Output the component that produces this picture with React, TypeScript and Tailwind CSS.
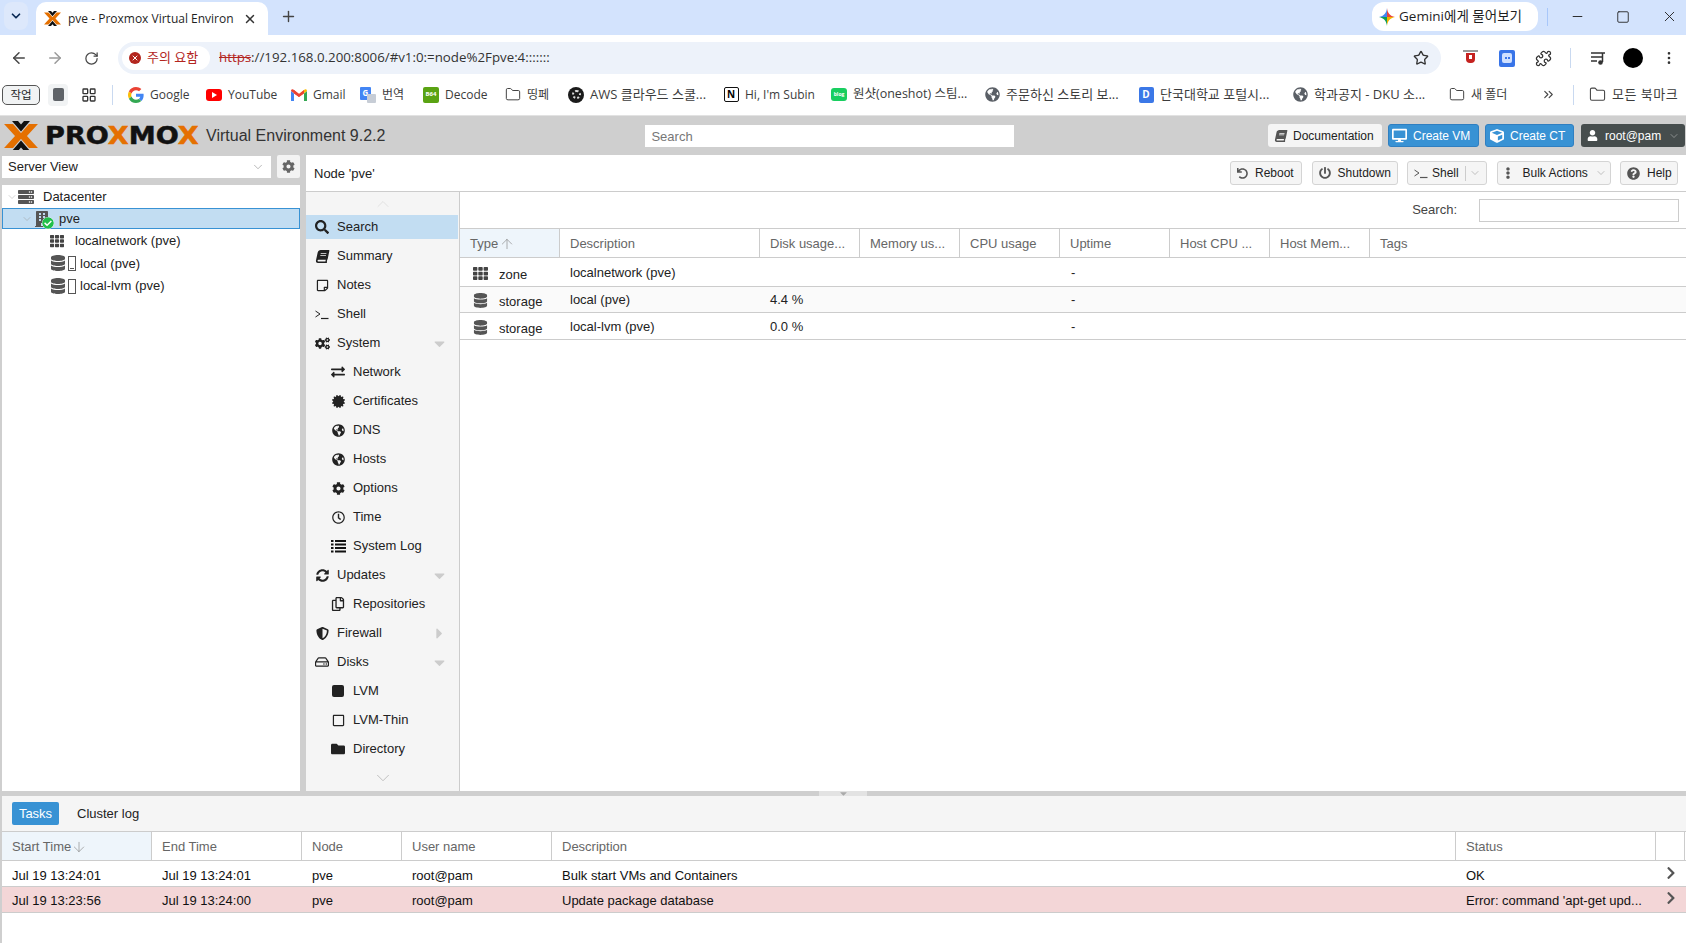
import React from "react";
import {
  ArrowLeft, ArrowRight, ArrowDown, ArrowUp, ChevronDown, ChevronUp, ChevronsRight, Folder, LayoutGrid,
  Minus, MoreVertical, Plus, Puzzle, RotateCw, Square, Star, X,
} from "lucide-react";
import {
  FaBook, FaBuilding, FaCaretDown, FaCaretRight, FaCertificate, FaCheckCircle, FaChevronRight, FaCog, FaCogs, FaCube, FaDatabase,
  FaDesktop, FaEllipsisV, FaExchangeAlt, FaFolder, FaGlobeAmericas, FaPowerOff, FaQuestionCircle, FaRegClock, FaRegCopy, FaRegHdd,
  FaRegSquare, FaRegStickyNote, FaSearch, FaServer, FaShieldAlt, FaSquareFull, FaSyncAlt, FaTh, FaUndo, FaUser,
} from "react-icons/fa";

const ProxLogoMark = ({ size = 34 }: { size?: number }) => (
  <svg width={size} height={size * 0.88} viewBox="0 0 34 30">
    <path d="M0 3 L9 3 L19.5 15 L9 27 L0 27 L11 15 Z" fill="#e57000" />
    <path d="M34 3 L25 3 L14.5 15 L25 27 L34 27 L23 15 Z" fill="#e57000" />
    <path d="M8 0 L14 0 L17 3.5 L20 0 L26 0 L17 10.5 Z" fill="#111" />
    <path d="M8 30 L14 30 L17 26.5 L20 30 L26 30 L17 19.5 Z" fill="#111" />
  </svg>
);

const GoogleG = () => (
  <svg width="16" height="16" viewBox="0 0 48 48">
    <path fill="#EA4335" d="M24 9.5c3.5 0 6.7 1.2 9.2 3.6l6.9-6.9C35.9 2.4 30.5 0 24 0 14.6 0 6.5 5.4 2.6 13.2l8 6.2C12.5 13.6 17.8 9.5 24 9.5z" />
    <path fill="#4285F4" d="M46.9 24.5c0-1.6-.1-3.1-.4-4.5H24v9h12.9c-.6 3-2.2 5.5-4.7 7.2l7.7 6c4.5-4.2 7-10.3 7-17.7z" />
    <path fill="#FBBC05" d="M10.5 28.6c-.5-1.4-.8-3-.8-4.6s.3-3.2.8-4.6l-8-6.2C.9 16.5 0 20.1 0 24s.9 7.500 2.600 10.800z" />
    <path fill="#34A853" d="M24 48c6.500 0 11.900-2.100 15.900-5.800l-7.700-6c-2.100 1.400-4.900 2.300-8.200 2.300-6.200 0-11.500-4.200-13.400-9.800l-8 6.200C6.500 42.600 14.600 48 24 48z" />
  </svg>
);

const YouTubeIcon = () => (
  <div className="flex h-[12px] w-[16px] items-center justify-center rounded-[3px] bg-[#f00]">
    <div className="h-0 w-0 border-y-[3px] border-l-[5px] border-y-transparent border-l-white" />
  </div>
);

const GmailIcon = () => (
  <svg width="16" height="14" viewBox="0 0 16 12">
    <path d="M0 2 L0 12 L3 12 L3 4.500 Z" fill="#4285F4" />
    <path d="M16 2 L16 12 L13 12 L13 4.500 Z" fill="#34A853" />
    <path d="M0 2 C0 0 2 0 3 1 L8 5 L8 8 L0 2 Z" fill="#EA4335" />
    <path d="M16 2 C16 0 14 0 13 1 L8 5 L8 8 L16 2 Z" fill="#FBBC05" />
    <path d="M3 1 L8 5 L13 1 L13 4.500 L8 8 L3 4.500 Z" fill="#EA4335" />
  </svg>
);

const TranslateIcon = () => (
  <div className="relative h-[16px] w-[16px]">
    <div className="flex h-[13px] w-[11px] items-center justify-center rounded-[1px] bg-[#4285f4] text-[8px] font-bold text-white">G</div>
    <div className="absolute bottom-0 right-0 h-[9px] w-[9px] rounded-[1px] bg-[#c7cdd6]" />
  </div>
);

const DecodeIcon = () => (
  <div className="flex h-[16px] w-[16px] items-center justify-center rounded-[2px] bg-[#5aa313] text-[6px] font-bold text-white">B64</div>
);

const AwsIcon = () => (
  <div className="flex h-[16px] w-[16px] items-center justify-center rounded-full bg-[#1b1b1b]">
    <div className="h-[9px] w-[9px] rounded-full border-2 border-dotted border-[#ddd]" />
  </div>
);

const NotionIcon = () => (
  <div className="flex h-[15px] w-[15px] items-center justify-center rounded-[2px] border border-[#111] bg-white text-[10px] font-bold text-black">N</div>
);

const BlogIcon = () => (
  <div className="flex h-[13px] w-[16px] items-center justify-center rounded-[3px] bg-[#19ce60] text-[5px] font-bold text-white">blog</div>
);

const DankookIcon = () => (
  <div className="flex h-[16px] w-[15px] items-center justify-center rounded-[2px] bg-[#3b78e7] text-[10px] font-bold text-white">D</div>
);

const Globe = () => <FaGlobeAmericas size={15} className="text-[#5a5f66]" />;
const BookmarkFolder = () => <Folder size={17} strokeWidth={1.5} className="text-[#444]" />;

const bookmarks = [
  { w: "w-[78px]", icon: <GoogleG />, label: "Google", text: "text-[12px]" },
  { w: "w-[85px]", icon: <YouTubeIcon />, label: "YouTube", text: "text-[12px]" },
  { w: "w-[69px]", icon: <GmailIcon />, label: "Gmail", text: "text-[12px]" },
  { w: "w-[63px]", icon: <TranslateIcon />, label: "번역", text: "text-[12px]" },
  { w: "w-[82px]", icon: <DecodeIcon />, label: "Decode", text: "text-[12px]" },
  { w: "w-[63px]", icon: <BookmarkFolder />, label: "띵페", text: "text-[12px]" },
  { w: "w-[155px]", icon: <AwsIcon />, label: "AWS 클라우드 스쿨...", text: "text-[13px]" },
  { w: "w-[108px]", icon: <NotionIcon />, label: "Hi, I'm Subin", text: "text-[12px]" },
  { w: "w-[153px]", icon: <BlogIcon />, label: "원샷(oneshot) 스팀...", text: "text-[12.5px]" },
  { w: "w-[154px]", icon: <Globe />, label: "주문하신 스토리 보...", text: "text-[13px]" },
  { w: "w-[154px]", icon: <DankookIcon />, label: "단국대학교 포털시...", text: "text-[13px]" },
  { w: "w-[157px]", icon: <Globe />, label: "학과공지 - DKU 소...", text: "text-[13px]" },
  { w: "w-[92px]", icon: <BookmarkFolder />, label: "새 폴더", text: "text-[12px]" },
];

const ChromeBar = () => (
  <div className="h-[116px] shrink-0 border-b border-[#e2e2e2] bg-white font-['Open_Sans','Noto_Sans_CJK_KR',sans-serif] text-[#1f1f1f]">
    <div className="flex h-[35px] items-start bg-[#d3e3fd] pt-[2px]">
      <div className="ml-[4px] flex h-[28px] w-[24px] items-center justify-center rounded-[8px] bg-[#dde8fb]">
        <ChevronDown size={14} strokeWidth={3} className="text-[#0b2a55]" />
      </div>
      <div className="ml-[8px] flex h-[33px] w-[232px] items-center rounded-t-[10px] bg-white pl-[8px] pr-[10px]">
        <ProxLogoMark size={17} />
        <span className="ml-[7px] w-[166px] overflow-hidden whitespace-nowrap text-[12px]">pve - Proxmox Virtual Environment</span>
        <X size={14} strokeWidth={2.5} className="ml-[9px] text-[#333]" />
      </div>
      <Plus size={17} strokeWidth={2} className="ml-[12px] mt-[6px] text-[#444]" />
      <div className="ml-auto flex h-[29px] w-[166px] items-center rounded-[12px] bg-white pl-[7px] text-[13.500px]">
        <svg width="16" height="18" viewBox="0 0 16 18">
          <path d="M8 0 C8.500 5 11 8 16 9 L8 9 Z" fill="#e8453c" />
          <path d="M16 9 C11 10 8.500 13 8 18 L8 9 Z" fill="#f4b400" />
          <path d="M8 18 C7.500 13 5 10 0 9 L8 9 Z" fill="#0f9d58" />
          <path d="M0 9 C5 8 7.500 5 8 0 L8 9 Z" fill="#4285f4" />
        </svg>
        <span className="ml-[4px] whitespace-nowrap">Gemini에게 물어보기</span>
      </div>
      <div className="ml-[9px] mt-[6px] h-[18px] w-px bg-[#a8c7fa]" />
      <Minus size={15} strokeWidth={1.5} className="ml-[22px] mt-[7px] text-[#222]" />
      <Square size={14} strokeWidth={1.5} className="ml-[31px] mt-[8px] text-[#222]" />
      <X size={17} strokeWidth={1.3} className="ml-[31px] mt-[6px] mr-[8px] text-[#222]" />
    </div>
    <div className="flex h-[46px] items-center">
      <ArrowLeft size={18} strokeWidth={2} className="ml-[10px] text-[#474747]" />
      <ArrowRight size={18} strokeWidth={2} className="ml-[18px] text-[#9a9a9a]" />
      <RotateCw size={15} strokeWidth={2} className="ml-[20px] text-[#474747]" />
      <div className="ml-[19px] flex h-[32px] w-[1323px] items-center rounded-full bg-[#edf2fa] pl-[4px] pr-[12px]">
        <div className="flex h-[24px] w-[88px] items-center rounded-full bg-white pl-[7px] text-[13px] text-[#b3261e]">
          <div className="flex h-[12px] w-[12px] items-center justify-center rounded-full bg-[#b3261e]">
            <X size={8} strokeWidth={3} className="text-white" />
          </div>
          <span className="ml-[6px] whitespace-nowrap">주의 요함</span>
        </div>
        <div className="ml-[9px] whitespace-nowrap text-[13.300px] text-[#333]">
          <span className="text-[#b3261e] line-through">https</span>://192.168.0.200:8006/#v1:0:=node%2Fpve:4:::::::
        </div>
        <Star size={16} strokeWidth={2} className="ml-auto text-[#333]" />
      </div>
      <div className="ml-[21px] flex h-[16px] w-[16px] flex-col items-center">
        <div className="h-[2px] w-[15px] bg-[#999]" />
        <div className="mt-[1px] flex h-[10px] w-[9px] items-start justify-center rounded-b-[4px] bg-[#c5221f] pt-[2px]">
          <div className="h-[4px] w-[3px] bg-white" />
        </div>
      </div>
      <div className="ml-[21px] flex h-[17px] w-[16px] items-center justify-center rounded-[2px] bg-[#3874e8]">
        <div className="flex h-[10px] w-[10px] items-center justify-center gap-px rounded-[2px] bg-[#cfe0ff]">
          <div className="h-[2px] w-[2px] bg-[#3874e8]" />
          <div className="h-[2px] w-[2px] bg-[#3874e8]" />
        </div>
      </div>
      <Puzzle size={17} strokeWidth={1.8} className="ml-[20px] text-[#333]" />
      <div className="ml-[18px] h-[20px] w-px bg-[#c9d9f0]" />
      <svg width="16" height="16" viewBox="0 0 16 16" className="ml-[19px] text-[#333]">
        <path d="M1 3 H12 M1 7 H12 M1 11 H7" stroke="currentColor" strokeWidth="1.500" fill="none" />
        <circle cx="10.500" cy="12.500" r="2.300" fill="currentColor" />
        <path d="M12.500 12 V3 H15" stroke="currentColor" strokeWidth="1.500" fill="none" />
      </svg>
      <div className="ml-[17px] h-[20px] w-[20px] rounded-full bg-black" />
      <MoreVertical size={16} strokeWidth={2} className="ml-[18px] text-[#333]" />
    </div>
    <div className="flex h-[27px] items-center text-[12px]">
      <div className="ml-[2px] flex h-[20px] w-[38px] items-center justify-center rounded-[5px] border border-[#555] bg-[#f1f3f4] text-[11.5px]">작업</div>
      <div className="ml-[8px] flex h-[22px] w-[20px] items-center justify-center rounded-[4px] bg-[#f1f3f4]">
        <div className="h-[13px] w-[11px] rounded-[2px] bg-[#5f6368]" />
      </div>
      <LayoutGrid size={16} strokeWidth={2} className="ml-[13px] text-[#333]" />
      <div className="ml-[15px] h-[20px] w-px bg-[#c9d9f0]" />
      <div className="ml-[15px] flex items-center">
        {bookmarks.map((b) => (
          <div key={b.label} className={`flex items-center ${b.w}`}>
            <div className="flex w-[16px] shrink-0 items-center justify-center">{b.icon}</div>
            <span className={`ml-[6px] whitespace-nowrap text-[#3c3c3c] ${b.text}`}>{b.label}</span>
          </div>
        ))}
      </div>
      <ChevronsRight size={15} strokeWidth={1.8} className="text-[#444]" />
      <div className="ml-[17px] h-[20px] w-px bg-[#c9d9f0]" />
      <div className="ml-[15px] flex items-center">
        <BookmarkFolder />
        <span className="ml-[6px] whitespace-nowrap text-[13px] tracking-[0.5px] text-[#3c3c3c]">모든 북마크</span>
      </div>
    </div>
  </div>
);

const HeaderButton = ({ icon, label, className }: { icon: React.ReactNode; label: string; className: string }) => (
  <div className={`flex h-[23px] items-center rounded-[3px] text-[12px] ${className}`}>
    {icon}
    <span className="ml-[6px] whitespace-nowrap">{label}</span>
  </div>
);

const PveHeader = () => (
  <div className="flex h-[39px] shrink-0 items-center bg-[#cfcfcf]">
    <div className="ml-[4px]">
      <ProxLogoMark size={34} />
    </div>
    <div className="ml-[7px] origin-left scale-x-[1.13] whitespace-nowrap font-['DejaVu_Sans',sans-serif] text-[24px] font-bold leading-none text-[#111] [-webkit-text-stroke:0.5px]">
      PRO<span className="text-[#e57000]">X</span>MO<span className="text-[#e57000]">X</span>
    </div>
    <div className="ml-[25px] whitespace-nowrap text-[16px] text-[#333]">Virtual Environment 9.2.2</div>
    <div className="ml-[260px] mt-[1px] flex h-[22px] w-[369px] items-center bg-white pl-[6px] pt-[1px] text-[13px] text-[#777]">Search</div>
    <div className="ml-auto flex items-center gap-[6px] pr-[1px]">
      <HeaderButton icon={<FaBook size={12} className="ml-[2px] -skew-x-12 text-[#555]" />} label="Documentation" className="w-[114px] bg-[#f5f5f5] pl-[5px] text-[#222]" />
      <HeaderButton icon={<FaDesktop size={15} />} label="Create VM" className="w-[91px] border border-[#2f7fc1] bg-[#3892d4] pl-[3px] font-medium text-white" />
      <HeaderButton icon={<FaCube size={14} />} label="Create CT" className="w-[89px] border border-[#2f7fc1] bg-[#3892d4] pl-[4px] font-medium text-white" />
      <div className="ml-[1px] flex h-[23px] w-[104px] items-center rounded-[3px] bg-[#464d4d] pl-[6px] text-[12px] text-white">
        <FaUser size={11} />
        <span className="ml-[7px]">root@pam</span>
        <ChevronDown size={12} strokeWidth={1} className="ml-[7px] text-[#ccc]" />
      </div>
    </div>
  </div>
);

const StorageGlyph = ({ used }: { used?: boolean }) => (
  <div className="flex items-center">
    <FaDatabase size={16} className="text-[#555]" />
    <div className="ml-[2px] flex h-[15px] w-[8px] items-end justify-center border border-[#555] px-[1px] pb-[1px]">
      {used && <div className="h-px w-full bg-[#555]" />}
    </div>
  </div>
);

const TreePanel = () => (
  <div className="flex w-[298px] shrink-0 flex-col">
    <div className="flex h-[23px] items-start">
      <div className="mt-px flex h-[22px] w-[269px] items-center justify-between bg-white pl-[6px] pr-[6px] text-[13px] text-[#222]">
        Server View
        <ChevronDown size={14} strokeWidth={1} className="text-[#888]" />
      </div>
      <div className="ml-[6px] flex h-[23px] w-[23px] items-center justify-center rounded-[2px] bg-[#f3f3f3]">
        <FaCog size={13} className="text-[#666]" />
      </div>
    </div>
    <div className="mt-[7px] flex-1 bg-white pt-px text-[13px] text-[#222]">
      <div className="flex h-[22px] items-center pl-[4px]">
        <ChevronDown size={12} strokeWidth={1} className="text-[#aaa]" />
        <FaServer size={16} className="text-[#555]" />
        <span className="ml-[9px]">Datacenter</span>
      </div>
      <div className="flex h-[21px] items-center border border-[#3892d4] bg-[#c2ddf2] pl-[18px]">
        <ChevronDown size={12} strokeWidth={1} className="text-[#999]" />
        <div className="relative ml-[1px] h-[16px] w-[21px]">
          <FaBuilding size={16} className="text-[#555]" />
          <FaCheckCircle size={12} className="absolute bottom-[-2px] right-[1px] rounded-full bg-white text-[#21bf4b]" />
        </div>
        <span className="ml-[4px]">pve</span>
      </div>
      <div className="flex h-[23px] items-center pl-[48px]">
        <FaTh size={14} className="text-[#444]" />
        <span className="ml-[11px]">localnetwork (pve)</span>
      </div>
      <div className="flex h-[22.500px] items-center pl-[48px]">
        <StorageGlyph used />
        <span className="ml-[4px]">local (pve)</span>
      </div>
      <div className="flex h-[23px] items-center pl-[48px]">
        <StorageGlyph />
        <span className="ml-[4px]">local-lvm (pve)</span>
      </div>
    </div>
  </div>
);

const TerminalIcon = ({ className }: { className?: string }) => (
  <svg width="14" height="12" viewBox="0 0 14 12" className={className}>
    <path d="M0.500 3 L5 6 L0.500 9" stroke="currentColor" strokeWidth="1" fill="none" />
    <path d="M6 10.500 H13.500" stroke="currentColor" strokeWidth="1.200" fill="none" />
  </svg>
);

const LogListIcon = () => (
  <svg width="15" height="13" viewBox="0 0 15 13">
    <path d="M0 1 H2.500 M4 1 H15 M0 4.500 H2.500 M4 4.500 H15 M0 8 H2.500 M4 8 H15 M0 11.500 H2.500 M4 11.500 H15" stroke="#111" strokeWidth="2" fill="none" />
  </svg>
);

type NavItem = { label: string; icon: React.ReactNode; sub?: boolean; caret?: "down" | "right"; active?: boolean };

const navItems: NavItem[] = [
  { label: "Search", icon: <FaSearch size={14} />, active: true },
  { label: "Summary", icon: <FaBook size={13} className="-skew-x-12" /> },
  { label: "Notes", icon: <FaRegStickyNote size={13} /> },
  { label: "Shell", icon: <TerminalIcon /> },
  { label: "System", icon: <FaCogs size={15} />, caret: "down" },
  { label: "Network", icon: <FaExchangeAlt size={14} />, sub: true },
  { label: "Certificates", icon: <FaCertificate size={13} />, sub: true },
  { label: "DNS", icon: <FaGlobeAmericas size={13} />, sub: true },
  { label: "Hosts", icon: <FaGlobeAmericas size={13} />, sub: true },
  { label: "Options", icon: <FaCog size={13} />, sub: true },
  { label: "Time", icon: <FaRegClock size={13} />, sub: true },
  { label: "System Log", icon: <LogListIcon />, sub: true },
  { label: "Updates", icon: <FaSyncAlt size={13} />, caret: "down" },
  { label: "Repositories", icon: <FaRegCopy size={14} />, sub: true },
  { label: "Firewall", icon: <FaShieldAlt size={13} />, caret: "right" },
  { label: "Disks", icon: <FaRegHdd size={14} />, caret: "down" },
  { label: "LVM", icon: <FaSquareFull size={12} className="rounded-[2px]" />, sub: true },
  { label: "LVM-Thin", icon: <FaRegSquare size={13} />, sub: true },
  { label: "Directory", icon: <FaFolder size={14} />, sub: true },
];

const NavMenu = () => (
  <div className="flex w-[154px] shrink-0 flex-col items-stretch border-r border-[#ccc] bg-[#f5f5f5] text-[13px] text-[#222]">
    <div className="flex h-[23px] items-center justify-center">
      <ChevronUp size={20} strokeWidth={1} className="text-[#ddd]" />
    </div>
    {navItems.map((item) => (
      <div key={item.label} className={`mb-[5px] flex h-[24px] items-center ${item.active ? "mr-[1px] bg-[#c2ddf2]" : ""} ${item.sub ? "pl-[24px]" : "pl-[8px]"}`}>
        <div className="flex w-[16px] shrink-0 items-center justify-center text-[#222]">{item.icon}</div>
        <span className="ml-[7px] whitespace-nowrap">{item.label}</span>
        {item.caret === "down" && <FaCaretDown size={17} className="ml-auto mr-[11px] text-[#ccc]" />}
        {item.caret === "right" && <FaCaretRight size={17} className="ml-auto mr-[11px] text-[#ccc]" />}
      </div>
    ))}
    <div className="mt-[1px] flex justify-center">
      <ChevronDown size={22} strokeWidth={1} className="text-[#bbb]" />
    </div>
  </div>
);

const ToolButton = ({ icon, label, className, caret, split }: { icon: React.ReactNode; label: string; className: string; caret?: boolean; split?: boolean }) => (
  <div className={`flex h-[24px] items-center rounded-[3px] border border-[#d4d4d4] bg-[#f5f5f5] pl-[6px] text-[12px] text-[#222] ${className}`}>
    {icon}
    <span className="ml-[7px] whitespace-nowrap">{label}</span>
    {split && <div className="ml-[6px] h-[15px] w-px bg-[#ccc]" />}
    {caret && <ChevronDown size={12} strokeWidth={1} className={`text-[#888] ${split ? "ml-[3px]" : "ml-[7px]"}`} />}
  </div>
);

const searchCols = [
  { label: "Type", w: "w-[100px]", sort: true },
  { label: "Description", w: "w-[200px]" },
  { label: "Disk usage...", w: "w-[100px]" },
  { label: "Memory us...", w: "w-[100px]" },
  { label: "CPU usage", w: "w-[100px]" },
  { label: "Uptime", w: "w-[110px]" },
  { label: "Host CPU ...", w: "w-[100px]" },
  { label: "Host Mem...", w: "w-[100px]" },
];

const searchRows = [
  { type: "zone", desc: "localnetwork (pve)", disk: "", h: "h-[29px] pt-[1px]", icon: <FaTh size={15} className="text-[#444]" /> },
  { type: "storage", desc: "local (pve)", disk: "4.4 %", h: "h-[26px]", bg: "bg-[#fafafa]", icon: <FaDatabase size={15} className="text-[#555]" /> },
  { type: "storage", desc: "local-lvm (pve)", disk: "0.0 %", h: "h-[27px] pt-[1px]", icon: <FaDatabase size={15} className="text-[#555]" /> },
];

const SearchGrid = () => (
  <div className="flex min-w-0 flex-1 flex-col bg-white">
    <div className="flex h-[36px] items-center justify-end pr-[7px]">
      <span className="text-[13px] text-[#444]">Search:</span>
      <div className="ml-[22px] h-[23px] w-[200px] border border-[#ccc] bg-white" />
    </div>
    <div className="flex h-[30px] border-y border-[#ccc] pt-[1px] text-[13px] text-[#666]">
      {searchCols.map((c) => (
        <div key={c.label} className={`-mt-[1px] flex items-center overflow-hidden whitespace-nowrap border-r border-[#ccc] pl-[10px] pt-[1px] ${c.w} ${c.sort ? "bg-[#eef5fb]" : ""}`}>
          {c.label}
          {c.sort && <ArrowUp size={16} strokeWidth={1} className="ml-[1px] text-[#888]" />}
        </div>
      ))}
      <div className="flex flex-1 items-center pl-[10px]">Tags</div>
    </div>
    {searchRows.map((r) => (
      <div key={r.desc} className={`flex items-center border-b border-[#ccc] text-[13px] text-[#222] ${r.h} ${r.bg ?? ""}`}>
        <div className="flex w-[100px] items-center pl-[10px] pt-[4px]">
          <div className="-mt-[2px] flex w-[20px] justify-center">{r.icon}</div>
          <span className="ml-[9px]">{r.type}</span>
        </div>
        <div className="w-[200px] pl-[10px]">{r.desc}</div>
        <div className="w-[100px] pl-[10px]">{r.disk}</div>
        <div className="w-[210px]" />
        <div className="pl-[1px]">-</div>
      </div>
    ))}
  </div>
);

const NodePanel = () => (
  <div className="flex min-w-0 flex-1 flex-col bg-white">
    <div className="flex h-[37px] shrink-0 items-center border-b border-[#ccc] pl-[8px] pr-[8px] text-[13px] text-[#222]">
      <span className="pt-[1px]">Node 'pve'</span>
      <div className="ml-auto flex items-center gap-[9.500px]">
        <ToolButton icon={<FaUndo size={11} className="text-[#555]" />} label="Reboot" className="w-[72px]" />
        <ToolButton icon={<FaPowerOff size={12} className="text-[#555]" />} label="Shutdown" className="w-[86px]" />
        <ToolButton icon={<TerminalIcon className="-mr-[3px] text-[#555]" />} label="Shell" className="w-[80px]" caret split />
        <ToolButton icon={<FaEllipsisV size={12} className="-ml-[2px] mr-[2px] text-[#555]" />} label="Bulk Actions" className="w-[114px]" caret />
        <ToolButton icon={<FaQuestionCircle size={13} className="text-[#555]" />} label="Help" className="w-[58px]" />
      </div>
    </div>
    <div className="flex min-h-0 flex-1">
      <NavMenu />
      <SearchGrid />
    </div>
  </div>
);

const taskCols = [
  { label: "Start Time", w: "w-[150px]", sort: true },
  { label: "End Time", w: "w-[150px]" },
  { label: "Node", w: "w-[100px]" },
  { label: "User name", w: "w-[150px]" },
  { label: "Description", w: "w-[904px]" },
  { label: "Status", w: "w-[200px]" },
];

const taskRows = [
  { start: "Jul 19 13:24:01", end: "Jul 19 13:24:01", desc: "Bulk start VMs and Containers", status: "OK", bg: "bg-white pt-[4px]" },
  { start: "Jul 19 13:23:56", end: "Jul 19 13:24:00", desc: "Update package database", status: "Error: command 'apt-get upd...", bg: "bg-[#f3d6d7] pt-[2px]" },
];

const LogPanel = () => (
  <div className="ml-[2px] flex min-h-0 flex-1 flex-col bg-white">
    <div className="flex h-[36px] shrink-0 items-center border-b border-[#ccc] bg-[#f5f5f5] pl-[10px] text-[13px] text-[#222]">
      <div className="flex h-[23px] w-[47px] items-center justify-center rounded-[2px] bg-[#3892d4] font-medium text-white">Tasks</div>
      <span className="ml-[18px]">Cluster log</span>
    </div>
    <div className="flex h-[29px] shrink-0 border-b border-[#ccc] pt-[1px] text-[13px] text-[#666]">
      {taskCols.map((c) => (
        <div key={c.label} className={`-mt-[1px] flex items-center border-r border-[#ccc] pl-[10px] pt-[1px] ${c.w} ${c.sort ? "bg-[#eef5fb]" : ""}`}>
          {c.label}
          {c.sort && <ArrowDown size={16} strokeWidth={1} className="text-[#888]" />}
        </div>
      ))}
      <div className="-mt-[1px] w-[29px] border-r border-[#ccc]" />
    </div>
    {taskRows.map((r) => (
      <div key={r.start} className={`flex h-[26px] shrink-0 items-center border-b border-[#ccc] text-[13px] text-[#111] ${r.bg}`}>
        <div className="w-[150px] pl-[10px]">{r.start}</div>
        <div className="w-[150px] pl-[10px]">{r.end}</div>
        <div className="w-[100px] pl-[10px]">pve</div>
        <div className="w-[150px] pl-[10px]">root@pam</div>
        <div className="w-[904px] pl-[10px]">{r.desc}</div>
        <div className="w-[200px] whitespace-nowrap pl-[10px]">{r.status}</div>
        <FaChevronRight size={14} className="ml-[8px] -mt-[6px] text-[#555]" />
      </div>
    ))}
  </div>
);

const App = () => (
  <div className="flex h-[943px] w-[1686px] flex-col overflow-hidden font-['Liberation_Sans',sans-serif]">
    <ChromeBar />
    <div className="flex min-h-0 flex-1 flex-col bg-[#cfcfcf]">
      <PveHeader />
      <div className="flex h-[636px] shrink-0 pl-[2px]">
        <TreePanel />
        <div className="ml-[6px] flex min-w-0 flex-1">
          <NodePanel />
        </div>
      </div>
      <div className="flex h-[5px] shrink-0 justify-center">
        <div className="flex h-[5px] w-[48px] items-center justify-center bg-[#e3e3e3]">
          <FaCaretDown size={11} className="text-[#aaa]" />
        </div>
      </div>
      <LogPanel />
    </div>
  </div>
);

export default App;
